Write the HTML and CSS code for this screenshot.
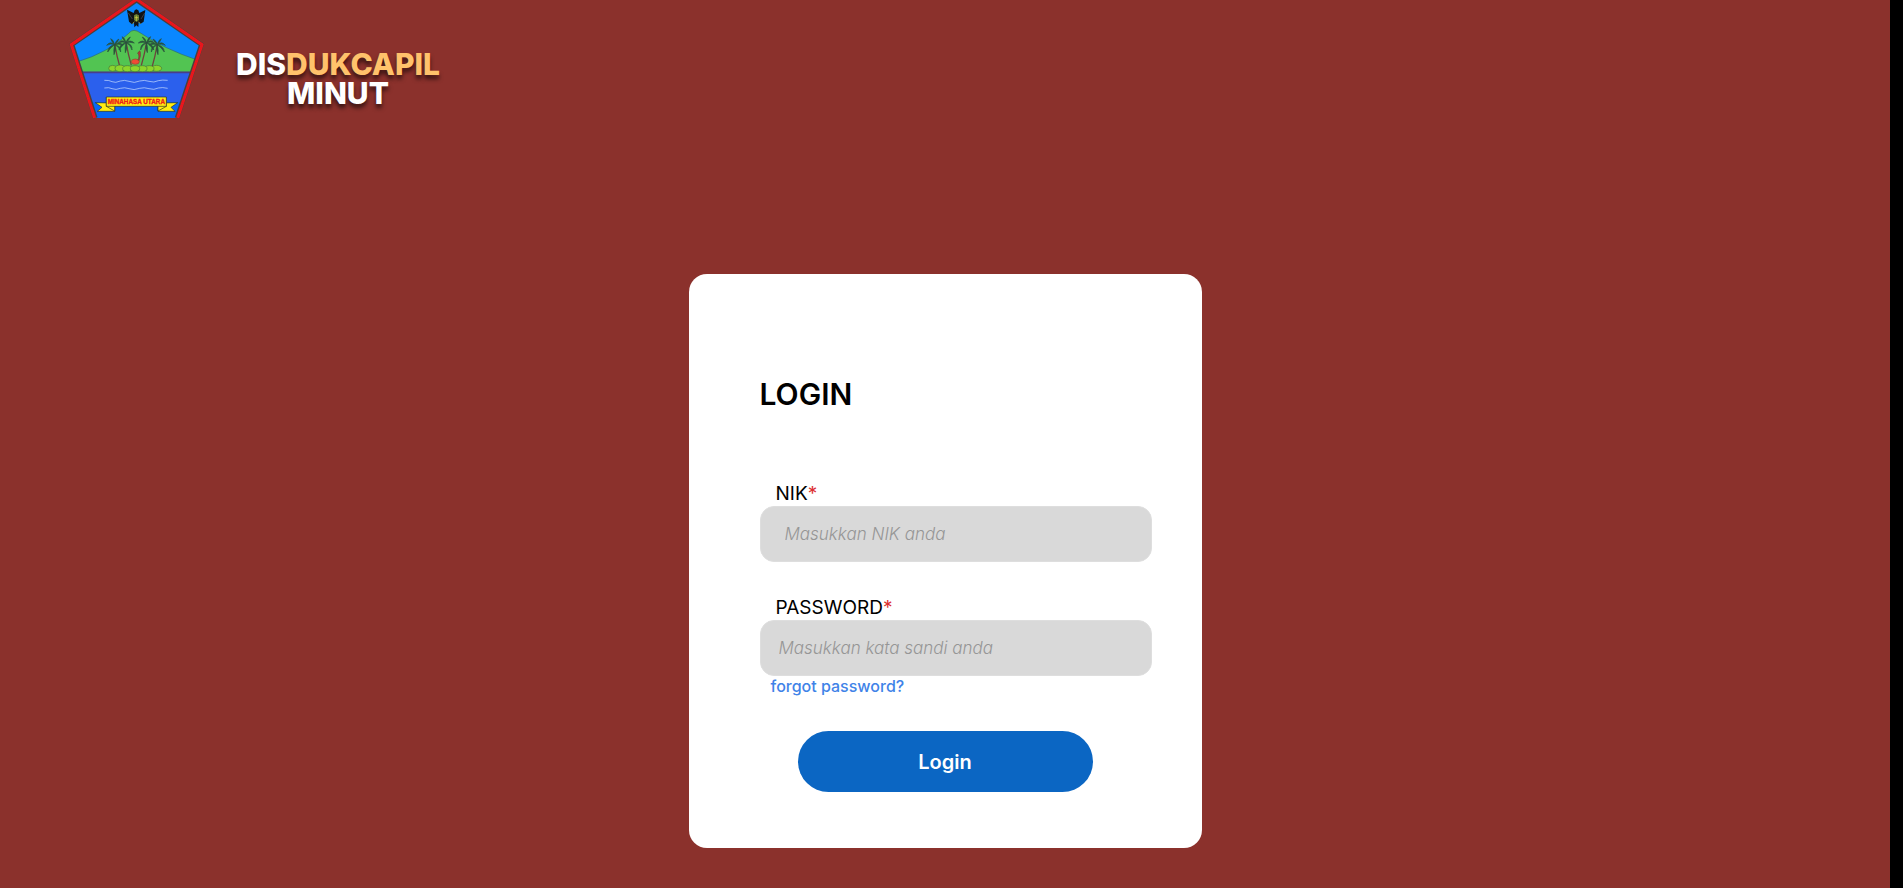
FILE: index.html
```html
<!DOCTYPE html>
<html lang="id">
<head>
<meta charset="utf-8">
<meta name="viewport" content="width=device-width, initial-scale=1">
<title>Disdukcapil Minut - Login</title>
<link rel="stylesheet" href="styles.css">
</head>
<body>
<div class="page">
  <header class="header">
    <svg class="emblem" viewBox="0 0 450 360" role="img" aria-label="Minahasa Utara">
      <defs>
        <clipPath id="shield"><path d="M230 0 422 134 351 354H106L36 134Z"/></clipPath>
        <g id="palm">
          <path d="M0 0Q6 35 16 70" fill="none" stroke="#70433c" stroke-width="4"/>
          <path d="M0 2Q-14-10-24 4Q-12-3 0 2ZM0 2Q-20 6-21 24Q-12 10 0 2ZM0 2Q-4 18-2 32Q6 16 0 2ZM0 2Q14 8 18 24Q20 6 0 2ZM0 2Q14-8 25 3Q10-1 0 2ZM0 2Q-4-14-12-16Q-8-5 0 2ZM0 2Q4-12 13-15Q8-4 0 2Z" fill="#28523c" stroke="#28523c" stroke-width="2"/>
        </g>
      </defs>
      <g clip-path="url(#shield)">
        <path d="M0 0H450V220H0Z" fill="#0a87ff"/>
        <path d="M50 186Q145 158 205 101Q213 91 222 91Q232 92 240 98Q315 148 412 180V217H50Z" fill="#52c452" stroke="#356f62" stroke-width="2"/>
        <path d="M30 217H430V306H30Z" fill="#2b60ed"/>
        <path d="M30 306H430V360H30Z" fill="#0868f5"/>
        <path d="M60 217H400" stroke="#493d89" stroke-width="5"/>
      </g>
      <path d="M106 354 36 134 230 0 424 134 351 354" fill="none" stroke="#49403e" stroke-width="14"/>
      <path d="M104 354 34 134 230-2 426 134 353 354" fill="none" stroke="#f51118" stroke-width="9"/>
      <path d="M104 354 34 134 230-2 426 134 353 354" fill="none" stroke="#963d3c" stroke-width="2" stroke-dasharray="3 4"/>
      <path d="M201 29 221 39 224 31 229 28 235 31 238 39 256 30 251 65 241 72 236 67 235 81 229 76 223 82 222 68 216 73 207 65Z" fill="#111416"/>
      <path d="M222 46 229 42 237 46V60L229 66 222 60Z" fill="#657c33"/>
      <path d="M224 53H235M229 47V63M223 65 218 71M235 65 241 71" stroke="#e4d449" stroke-width="2"/>
      <path d="M205 39 217 57M254 39 243 57" stroke="#50535c" stroke-width="2"/>
      <use href="#palm" x="164" y="132"/>
      <use href="#palm" x="198" y="126"/>
      <use href="#palm" transform="translate(260 126) scale(-1 1)"/>
      <use href="#palm" transform="translate(292 132) scale(-1 1)"/>
      <g fill="#8bd52c" stroke="#46743c" stroke-width="2">
        <ellipse cx="158" cy="205" rx="12" ry="9"/><ellipse cx="290" cy="205" rx="15" ry="9"/>
        <ellipse cx="180" cy="205" rx="15" ry="10"/><ellipse cx="268" cy="206" rx="14" ry="9"/>
        <ellipse cx="202" cy="206" rx="14" ry="9"/><ellipse cx="247" cy="206" rx="14" ry="9"/>
        <ellipse cx="225" cy="206" rx="14" ry="9"/>
      </g>
      <ellipse cx="226" cy="185" rx="12" ry="8" fill="#f04935" stroke="#8d4832" stroke-width="2"/>
      <path d="M234 181Q240 166 233 160Q240 148 241 157Q243 168 237 182" fill="#b23a35" stroke="#673c35" stroke-width="2"/>
      <g fill="none" stroke="#cfe3ff" stroke-width="2">
        <path d="M133 241Q148 240 156 245Q166 250 181 243Q193 239 207 244Q223 251 239 243Q253 239 267 244Q282 249 295 242Q307 239 323 241"/>
        <path d="M133 264Q147 261 156 266Q168 271 181 265Q194 261 207 266Q222 272 239 265Q253 261 267 266Q282 271 295 264Q307 261 323 265"/>
      </g>
      <g fill="#ffed13" stroke="#292b2a" stroke-width="2">
        <path d="M106 308 164 309V334H112L126 322Z"/>
        <path d="M353 308 294 309V334H345L333 322Z"/>
        <path d="M139 293 164 318V333L139 319Z"/>
        <path d="M319 293 294 318V333L319 319Z"/>
        <path d="M139 291H319V319H139Z"/>
      </g>
      <text class="emblem-name" x="229" y="313" text-anchor="middle">MINAHASA UTARA</text>
    </svg>
    <div class="brand">DIS<span class="brand-accent">DUKCAPIL</span><br>MINUT</div>
  </header>
  <main class="main">
    <form class="card">
      <h1 class="title">LOGIN</h1>
      <div class="field">
        <label class="label" for="nik">NIK<span class="required">*</span></label>
        <input class="input input-nik" id="nik" type="text" placeholder="Masukkan NIK anda">
      </div>
      <div class="field">
        <label class="label" for="password">PASSWORD<span class="required">*</span></label>
        <input class="input" id="password" type="password" placeholder="Masukkan kata sandi anda">
        <a class="forgot" href="#">forgot password?</a>
      </div>
      <div class="actions"><button class="submit" type="submit">Login</button></div>
    </form>
  </main>
</div>
</body>
</html>
```
FILE: styles.css
```css
* { box-sizing: border-box; }

body {
  margin: 0;
  padding-right: 13px;
  background: #000;
  font-family: Inter, "Liberation Sans", sans-serif;
}

.page {
  min-height: 100vh;
  background: #8b312c;
}

.header {
  display: flex;
  align-items: flex-start;
  gap: 26px;
  padding-left: 60px;
}

.emblem {
  display: block;
  width: 150px;
  height: 120px;
}

.emblem-name {
  font: bold 19px "Liberation Sans Narrow", "Liberation Sans", sans-serif;
  fill: #ef2319;
  stroke: #ef2319;
  stroke-width: 1px;
}

.brand {
  padding-top: 50px;
  color: #fff;
  font-size: 30px;
  font-weight: 800;
  line-height: 29px;
  text-align: center;
  text-shadow: 0 4px 4px rgba(0, 0, 0, 0.6);
}

.brand-accent { color: #ffc26b; }

.main {
  display: flex;
  justify-content: center;
  padding: 154px 0 39px;
}

.card {
  width: 100%;
  max-width: 513px;
  padding: 102px 50px 56px 71px;
  border-radius: 18px;
  background: #fff;
}

.title {
  margin: 0 0 70px;
  color: #000;
  font-size: 30px;
  font-weight: 600;
  line-height: 36px;
}

.field {
  display: flex;
  flex-direction: column;
  align-items: flex-start;
  margin-bottom: 34px;
}

.field:last-of-type { margin-bottom: 35px; }

.label {
  padding-left: 16px;
  color: #000;
  font-size: 19px;
  font-weight: 400;
  line-height: 24px;
}

.required { color: #dc2f2f; }

.input {
  width: 100%;
  height: 56px;
  padding: 0 18px;
  border: 1px solid #dedede;
  border-radius: 14px;
  background: #d9d9d9;
  color: #333;
  font-family: inherit;
  font-size: 17px;
}

.input-nik { padding-left: 24px; }

.input::placeholder {
  color: #969696;
  font-style: italic;
  font-weight: 300;
}

.forgot {
  padding-left: 11px;
  color: #3f83e8;
  font-size: 16px;
  font-weight: 500;
  line-height: 20px;
  text-decoration: none;
}

.actions {
  padding: 1px 59px 0 38px;
}

.submit {
  width: 100%;
  height: 61px;
  border: 0;
  border-radius: 31px;
  background: #0b66c3;
  color: #fff;
  font-family: inherit;
  font-size: 20px;
  font-weight: 600;
}
```
